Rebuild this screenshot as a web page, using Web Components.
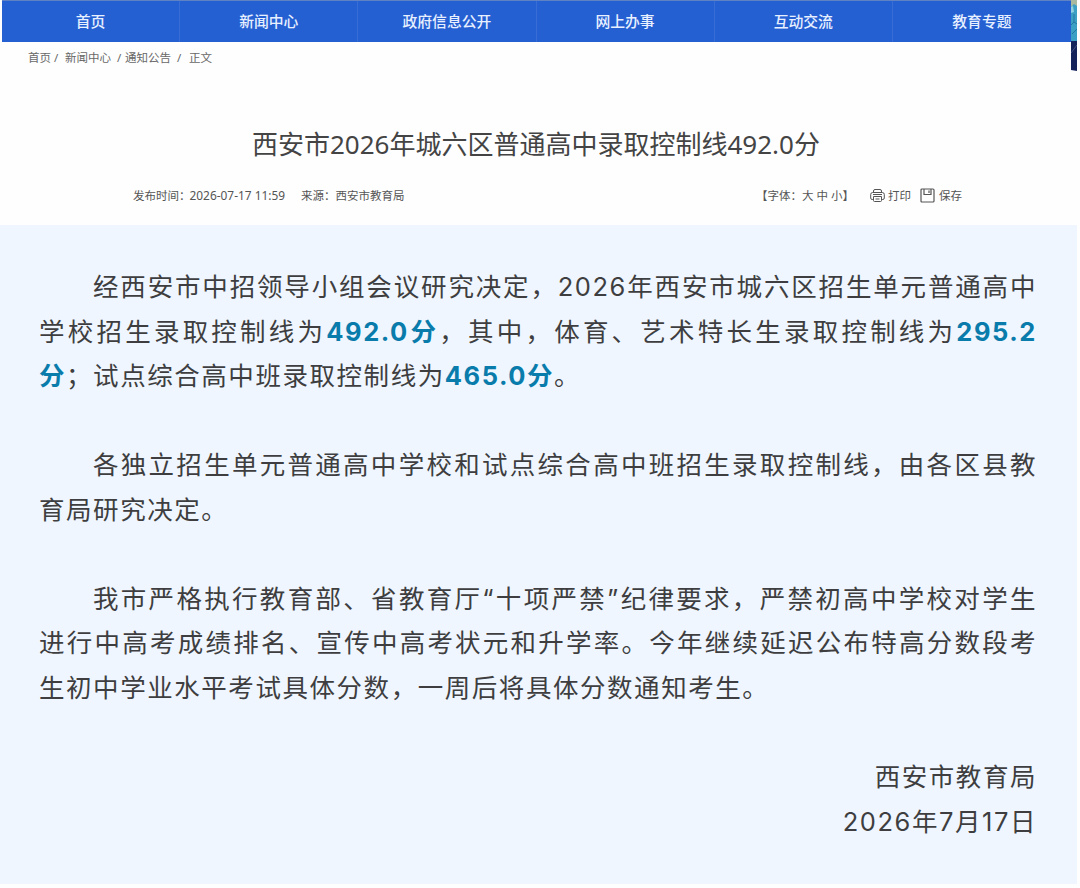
<!DOCTYPE html>
<html lang="zh-CN">
<head>
<meta charset="UTF-8">
<title>西安市教育局</title>
<style>
  body {
    margin: 0;
    background: #fefefe;
    font-family: "Noto Sans", "Noto Sans CJK SC", sans-serif;
    color: #444;
    width: 1080px;
    height: 888px;
    overflow: hidden;
  }
</style>
</head>
<body>
<notice-page>
  <site-nav slot="nav" items="首页,新闻中心,政府信息公开,网上办事,互动交流,教育专题"></site-nav>
  <bread-crumb slot="crumb">
    <span style="width:26px">首页</span><span style="width:11px">/</span><span style="width:52px">新闻中心</span><span style="width:8px">/</span><span style="width:52px">通知公告</span><span style="width:12px">/</span><span>正文</span>
  </bread-crumb>
  <article-head slot="head">
    <span slot="title">西安市2026年城六区普通高中录取控制线492.0分</span>
    <span slot="time">2026-07-17 11:59</span>
    <span slot="source">西安市教育局</span>
  </article-head>
  <notice-body slot="body">
    <text-line indent fill>经西安市中招领导小组会议研究决定，2026年西安市城六区招生单元普通高中</text-line>
    <text-line fill>学校招生录取控制线为<b>492.0分</b>，其中，体育、艺术特长生录取控制线为<b>295.2</b></text-line>
    <text-line><b>分</b>；试点综合高中班录取控制线为<b>465.0分</b>。</text-line>
    <text-line></text-line>
    <text-line indent fill>各独立招生单元普通高中学校和试点综合高中班招生录取控制线，由各区县教</text-line>
    <text-line>育局研究决定。</text-line>
    <text-line></text-line>
    <text-line indent fill>我市严格执行教育部、省教育厅“十项严禁”纪律要求，严禁初高中学校对学生</text-line>
    <text-line fill>进行中高考成绩排名、宣传中高考状元和升学率。今年继续延迟公布特高分数段考</text-line>
    <text-line>生初中学业水平考试具体分数，一周后将具体分数通知考生。</text-line>
    <text-line></text-line>
    <text-line end>西安市教育局</text-line>
    <text-line end>2026年7月17日</text-line>
  </notice-body>
</notice-page>

<script>
class NoticePage extends HTMLElement {

    constructor(){
        super();
        this.attachShadow({mode: 'open'});
    }

    connectedCallback(){
        this.shadowRoot.innerHTML=`
        <style>
          :host {
            display: flex;
            flex-direction: column;
            height: 888px;
            position: relative;
          }
          .banner {
            position: absolute;
            left: 1071px;
            top: 0;
            width: 6px;
            height: 71px;
          }
        </style>
        <slot name="nav"></slot>
        <slot name="crumb"></slot>
        <slot name="head"></slot>
        <slot name="body"></slot>
        <svg class="banner" viewBox="0 0 6 71" preserveAspectRatio="none">
          <rect width="6" height="42" fill="#3c9fc4"/>
          <path d="M0 0H6V6L3 4L0 7Z" fill="#a9b9a0"/>
          <path d="M0 7L2 6L3 12L0 13Z" fill="#8fd0e0"/>
          <path d="M0 25L3 22L6 24M3 22V14M1 34L6 29" stroke="#2476a3" fill="none"/>
          <path d="M0 41H6V71L0 70Z" fill="#14235a"/>
          <path d="M0 53L6 45" stroke="#405080" fill="none"/>
        </svg>
        `;
    }
}

class SiteNav extends HTMLElement {

    static get observedAttributes (){
        return ['items'];
    }

    constructor(){
        super();
        this.attachShadow({mode: 'open'});
    }

    connectedCallback(){
        this.render();
    }

    attributeChangedCallback(name, oldValue, newValue){
        if(oldValue !== newValue){
            this.render();
        }
    }

    render(){
        const items = (this.getAttribute('items') || '').split(',');
        this.shadowRoot.innerHTML=`
        <style>
          :host {
            display: block;
            flex: none;
            height: 42px;
            width: 1069px;
            margin-left: 2px;
          }
          nav {
            display: grid;
            grid-template-columns: repeat(6, 1fr);
            height: 42px;
            box-sizing: border-box;
            background: #2560d3;
            border-top: 1px solid #5f82c4;
          }
          a {
            color: #e8f0ff;
            font-size: 14.8px;
            font-weight: 500;
            line-height: 40px;
            text-align: center;
            border-right: 1px solid #386dd5;
          }
          a:last-child {
            border-right: 0;
          }
        </style>
        <nav>${items.map(t => `<a>${t}</a>`).join('')}</nav>
        `;
    }
}

class BreadCrumb extends HTMLElement {

    constructor(){
        super();
        this.attachShadow({mode: 'open'});
    }

    connectedCallback(){
        this.shadowRoot.innerHTML=`
        <style>
          :host {
            display: flex;
            flex: none;
            height: 32px;
            padding-left: 28px;
            font-size: 11.5px;
            line-height: 32px;
            color: #686868;
            white-space: nowrap;
          }
        </style>
        <slot></slot>
        `;
    }
}

class ArticleHead extends HTMLElement {

    constructor(){
        super();
        this.attachShadow({mode: 'open'});
    }

    connectedCallback(){
        this.shadowRoot.innerHTML=`
        <style>
          :host {
            display: block;
            flex: none;
            height: 151px;
          }
          h1 {
            margin: 0;
            padding: 50px 0 0 252px;
            font-size: 26px;
            font-weight: 400;
            line-height: 40px;
            white-space: nowrap;
          }
          .meta {
            display: flex;
            align-items: center;
            height: 24px;
            padding: 19px 118px 0 133px;
            font-size: 11.5px;
            color: #555;
            white-space: pre;
          }
          .time {
            font-size: 11.9px;
            margin-left: -1px;
          }
          .source {
            margin-left: 16px;
          }
          .size {
            margin-left: auto;
            margin-right: 16px;
          }
          .tool {
            display: flex;
            align-items: center;
            gap: 3px;
          }
          .tool + .tool {
            margin-left: 9px;
            gap: 4px;
          }
          svg {
            width: 15px;
            height: 15px;
            fill: none;
            stroke: #555;
          }
        </style>
        <h1><slot name="title"></slot></h1>
        <div class="meta">
          <span>发布时间：</span><span class="time"><slot name="time"></slot></span>
          <span class="source">来源：<slot name="source"></slot></span>
          <span class="size">【字体：大 中 小】</span>
          <span class="tool">
            <svg viewBox="0 0 15 15"><path d="M3.5 4.5V3Q3.5 1.5 5 1.5H10Q11.5 1.5 11.5 3V4.5M3.5 11.5H2.2Q.7 11.5 .7 10V6.5Q.7 4.5 2.7 4.5H12.3Q14.3 4.5 14.3 6.5V10Q14.3 11.5 12.8 11.5H11.5M3.5 8.5H11.5V12.5Q11.5 13.5 10.5 13.5H4.5Q3.5 13.5 3.5 12.5ZM3 6.5H12M5.5 11H9.5"/></svg>打印</span>
          <span class="tool">
            <svg viewBox="0 0 15 15"><path d="M2 1H13Q14 1 14 2V13Q14 14 13 14H2Q1 14 1 13V2Q1 1 2 1ZM4 1V6.5H11V1M9 2.5V5" stroke-width="1.2"/></svg>保存</span>
        </div>
        `;
    }
}

class NoticeBody extends HTMLElement {

    constructor(){
        super();
        this.attachShadow({mode: 'open'});
    }

    connectedCallback(){
        this.shadowRoot.innerHTML=`
        <style>
          :host {
            display: flex;
            flex-direction: column;
            flex: none;
            box-sizing: border-box;
            width: 1077px;
            height: 659px;
            padding: 40px 40px 0 39px;
            background: #f0f6ff;
            color: #3e3e40;
            font-family: Inter, "Noto Sans CJK SC", sans-serif;
            font-size: 25.5px;
            letter-spacing: 1.55px;
          }
        </style>
        <slot></slot>
        `;
    }
}

class TextLine extends HTMLElement {

    constructor(){
        super();
        this.attachShadow({mode: 'open'});
    }

    connectedCallback(){
        this.shadowRoot.innerHTML=`
        <style>
          :host {
            display: block;
            flex: none;
            height: 44.55px;
            line-height: 44.55px;
            white-space: nowrap;
          }
          :host([indent]) {
            padding-left: 54px;
          }
          :host([fill]) {
            text-align: justify;
            text-align-last: justify;
          }
          :host([end]) {
            text-align: right;
          }
          ::slotted(b) {
            color: #0a7cab;
            font-weight: 700;
          }
        </style>
        <slot></slot>
        `;
    }
}

customElements.define('notice-page', NoticePage)
customElements.define('site-nav', SiteNav)
customElements.define('bread-crumb', BreadCrumb)
customElements.define('article-head', ArticleHead)
customElements.define('notice-body', NoticeBody)
customElements.define('text-line', TextLine)
</script>
</body>
</html>
